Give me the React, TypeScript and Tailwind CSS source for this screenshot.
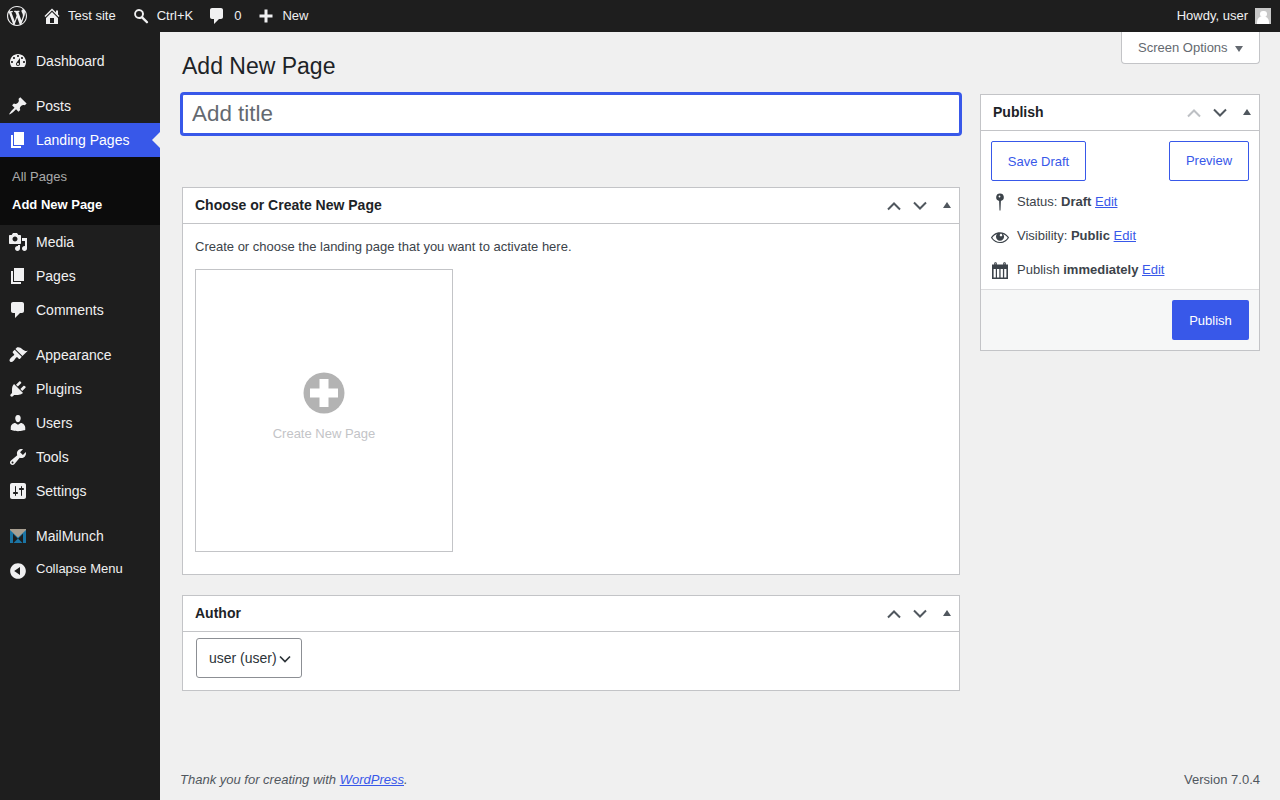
const icons: Record<string, string> = {
  wp: "M20 10c0-5.51-4.49-10-10-10C4.48 0 0 4.49 0 10c0 5.52 4.48 10 10 10 5.51 0 10-4.48 10-10zM7.78 15.37L4.37 6.22c.55-.02 1.17-.08 1.17-.08.5-.06.44-1.13-.06-1.11 0 0-1.45.11-2.37.11-.18 0-.37 0-.58-.01C4.12 2.69 6.87 1.11 10 1.11c2.33 0 4.45.87 6.05 2.34-.68-.11-1.65.39-1.65 1.58 0 .74.45 1.36.9 2.1.35.61.55 1.36.55 2.46 0 1.49-1.4 5-1.4 5l-3.03-8.37c.54-.02.82-.17.82-.17.5-.05.44-1.25-.06-1.22 0 0-1.44.12-2.38.12-.87 0-2.33-.12-2.33-.12-.5-.03-.56 1.2-.06 1.22l.92.08 1.26 3.41zM17.41 10c.24-.64.74-1.87.43-4.25.7 1.29 1.05 2.71 1.05 4.25 0 3.29-1.73 6.24-4.4 7.78.97-2.59 1.94-5.2 2.92-7.78zM6.1 18.09C3.12 16.65 1.11 13.53 1.11 10c0-1.3.23-2.48.72-3.59C3.25 10.3 4.67 14.2 6.1 18.09zm4.03-6.63l2.58 6.98c-.86.29-1.76.45-2.71.45-.79 0-1.57-.11-2.29-.33.81-2.38 1.62-4.74 2.42-7.1z",
  home: "M16 8.5l1.53 1.53-1.06 1.06L10 4.62l-6.47 6.47-1.06-1.06L10 2.5l4 4v-2h2v4zm-6-2.46l6 5.99V18H4v-5.97zM12 17v-5H8v5h4z",
  search: "M8 3a5 5 0 0 1 4.2 7.7l4.7 4.7c.4.4.4 1 0 1.4l-.3.3c-.4.4-1 .4-1.4 0l-4.7-4.7A5 5 0 1 1 8 3zm0 2a3 3 0 1 0 0 6 3 3 0 0 0 0-6z",
  comment: "M5 2h9c1.1 0 2 .9 2 2v7c0 1.1-.9 2-2 2h-2l-5 5v-5H5c-1.1 0-2-.9-2-2V4c0-1.1.9-2 2-2z",
  plus: "M16.5 8.5v3h-5v5h-3v-5h-5v-3h5v-5h3v5z",
  dashboard: "M3.76 16h12.48c1.1-1.37 1.76-3.11 1.76-5 0-4.42-3.58-8-8-8s-8 3.58-8 8c0 1.89.66 3.63 1.76 5zM10 4c.55 0 1 .45 1 1s-.45 1-1 1-1-.45-1-1 .45-1 1-1zM6 6c.55 0 1 .45 1 1s-.45 1-1 1-1-.45-1-1 .45-1 1-1zm8 0c.55 0 1 .45 1 1s-.45 1-1 1-1-.45-1-1 .45-1 1-1zm-5.37 5.55L12 7v6c0 1.1-.9 2-2 2s-2-.9-2-2c0-.57.24-1.08.63-1.45zM4 10c.55 0 1 .45 1 1s-.45 1-1 1-1-.45-1-1 .45-1 1-1zm12 0c.55 0 1 .45 1 1s-.45 1-1 1-1-.45-1-1 .45-1 1-1zm-5 3c0-.55-.45-1-1-1s-1 .45-1 1 .45 1 1 1 1-.45 1-1z",
  pin: "M10.44 3.02l1.82-1.82 6.36 6.35-1.83 1.82c-1.05-.68-2.48-.57-3.41.36l-.75.75c-.92.93-1.04 2.35-.35 3.41l-1.83 1.82-2.41-2.41-2.8 2.79c-.42.42-3.38 2.71-3.8 2.29s1.86-3.39 2.28-3.81l2.79-2.79L4.1 9.36l1.83-1.82c1.05.69 2.48.57 3.4-.36l.75-.75c.93-.92 1.05-2.35.36-3.41z",
  page: "M6 15V2h10v13H6zm-1 1h8v2H3V5h2v11z",
  media: "M13 11V4c0-.55-.45-1-1-1h-1.67L9 1H5L3.67 3H2c-.55 0-1 .45-1 1v7c0 .55.45 1 1 1h10c.55 0 1-.45 1-1zM7 4.5c1.38 0 2.5 1.12 2.5 2.5S8.38 9.5 7 9.5 4.5 8.38 4.5 7 5.62 4.5 7 4.5zM14 6h5v10.5c0 1.38-1.12 2.5-2.5 2.5S14 17.88 14 16.5s1.12-2.5 2.5-2.5c.17 0 .34.02.5.05V9h-3V6zm-4 8.05V13h2v3.5c0 1.38-1.12 2.5-2.5 2.5S7 17.88 7 16.5 8.12 14 9.5 14c.17 0 .34.02.5.05z",
  brush: "M14.48 11.06L7.41 3.99l1.5-1.5c.5-.56 2.3-.47 3.51.32 1.21.8 1.43 1.28 2.91 2.1 1.18.64 2.45 1.26 4.45.85zm-.71.71L6.7 4.7 4.93 6.47c-.39.39-.39 1.02 0 1.41l1.06 1.06c.39.39.39 1.03 0 1.42-.6.6-1.43 1.11-2.21 1.69-.35.26-.7.53-1.01.84-1.43 1.43-1.6 2.8-.75 3.65.85.85 2.22.68 3.65-.75.31-.31.58-.66.84-1.01.58-.78 1.09-1.61 1.69-2.21.39-.39 1.03-.39 1.42 0l1.06 1.06c.39.39 1.02.39 1.41 0z",
  plugin: "M13.11 4.36L9.87 7.6 8 5.73l3.24-3.24c.35-.34 1.05-.2 1.56.32.52.51.66 1.21.31 1.55zm-8 1.77l.91-1.12 9.01 9.01-1.19.84c-.71.71-2.63 1.16-3.82 1.16H6.14L4.9 17.26c-.59.59-1.54.59-2.12 0-.59-.58-.59-1.53 0-2.12l1.24-1.24v-3.88c0-1.13.4-3.19 1.09-3.89zm7.26 3.97l3.24-3.24c.34-.35 1.04-.21 1.55.31.52.51.66 1.21.31 1.55l-3.24 3.25z",
  users: "M10 9.25c-2.27 0-2.73-3.44-2.73-3.44C7 4.02 7.82 2 9.97 2c2.16 0 2.98 2.02 2.71 3.81 0 0-.41 3.44-2.68 3.44zm0 2.57L12.72 10c2.39 0 4.52 2.33 4.52 4.53v2.49s-3.65 1.13-7.24 1.13c-3.65 0-7.24-1.13-7.24-1.13v-2.49c0-2.25 1.94-4.48 4.47-4.48z",
  tools: "M16.68 9.77c-1.34 1.34-3.3 1.67-4.95.99l-5.41 6.52c-.99.99-2.59.99-3.58 0s-.99-2.59 0-3.57l6.52-5.42c-.68-1.65-.35-3.61.99-4.95 1.28-1.28 3.12-1.62 4.72-1.06l-2.89 2.89 2.82 2.82 2.86-2.87c.53 1.58.18 3.39-1.08 4.65zM3.81 16.21c.4.39 1.04.39 1.43 0 .4-.4.4-1.04 0-1.43-.39-.4-1.03-.4-1.43 0-.39.39-.39 1.03 0 1.43z",
  settings: "M18 16V4c0-1.1-.9-2-2-2H4c-1.1 0-2 .9-2 2v12c0 1.1.9 2 2 2h12c1.1 0 2-.9 2-2zM8 11h1c.55 0 1 .45 1 1s-.45 1-1 1H8v1.5c0 .28-.22.5-.5.5s-.5-.22-.5-.5V13H6c-.55 0-1-.45-1-1s.45-1 1-1h1V5.5c0-.28.22-.5.5-.5s.5.22.5.5V11zm5-2h-1c-.55 0-1-.45-1-1s.45-1 1-1h1V5.5c0-.28.22-.5.5-.5s.5.22.5.5V7h1c.55 0 1 .45 1 1s-.45 1-1 1h-1v5.5c0 .28-.22.5-.5.5s-.5-.22-.5-.5V9z",
  collapse: "M10 2.16c4.33 0 7.84 3.51 7.84 7.84s-3.51 7.84-7.84 7.84S2.16 14.33 2.16 10 5.71 2.16 10 2.16zm2 11.72V6.12L6.18 9.97z",
  eye: "M18.3 9.5C15 4.9 8.5 3.8 3.9 7.2c-1.2.9-2.2 2.1-3 3.4.2.4.5.8.8 1.2 3.3 4.6 9.6 5.6 14.2 2.4.9-.7 1.7-1.4 2.4-2.4.3-.4.5-.8.8-1.2-.3-.4-.5-.7-.8-1.1zm-8.2-2.3c.5-.5 1.3-.5 1.8 0s.5 1.3 0 1.8-1.3.5-1.8 0c-.5-.4-.5-1.3 0-1.8zm-.1 7.7c-3.1 0-6-1.6-7.7-4.2C3.5 9 5.1 7.8 7 7c-.7.8-1 1.7-1 2.7 0 2.2 1.7 4.1 4 4.1 2.2 0 4.1-1.7 4.1-4v-.1c0-1-.4-2-1.1-2.7 1.9.8 3.5 2 4.7 3.7-1.7 2.6-4.6 4.2-7.7 4.2z",
  mappin: "M10 1.5a3.8 3.8 0 0 1 .9 7.5l-.4 9.5h-1L9.1 9A3.8 3.8 0 0 1 10 1.5zM9.5 3.6a.9.9 0 1 0 0 1.8.9.9 0 0 0 0-1.8z",
  calendar: "M4.2 4.5V3.2c0-1.4 2.6-1.4 2.6 0v1.3h6.4V3.2c0-1.4 2.6-1.4 2.6 0v1.3H18V19H2V4.5h2.2zm1-.2h.6V3.2h-.6v1.1zm9 0h.6V3.2h-.6v1.1zM3.6 9v8.5h2.2V9H3.6zm3.4 0v8.5h2.3V9H7zm3.6 0v8.5h2.3V9h-2.3zm3.6 0v8.5h2.2V9h-2.2z",
};

function Icon({ name, className }: { name: string; className: string }) {
  return (
    <svg viewBox="0 0 20 20" className={className} fill="currentColor">
      <path fillRule={name === "calendar" || name === "mappin" ? "evenodd" : undefined} d={icons[name]} />
    </svg>
  );
}

function MailMunchIcon() {
  return (
    <svg viewBox="0 0 20 20" className="w-5 h-5 shrink-0">
      <path d="M2 3h16v14h-3V8l-5 5-5-5v9H2z" fill="#1b75a5" />
      <path d="M2 3h16v1l-8 7.5L2 4z" fill="#a89f91" />
      <path d="M5 8l5 5 5-5v9H5z" fill="#1e1e1e" />
      <path d="M5.5 17L10 12.5l4.5 4.5z" fill="#1b75a5" />
    </svg>
  );
}

function MenuItem({ icon, label, active }: { icon: string; label: string; active?: boolean }) {
  return (
    <div className={`relative h-[34px] flex items-center pl-2 gap-2 text-sm ${active ? "bg-[#3858e9] text-white" : "text-[#f0f0f1]"}`}>
      <Icon name={icon} className="w-5 h-5 shrink-0" />
      <span>{label}</span>
      {active && (
        <div className="absolute right-0 top-[9px] w-0 h-0 border-y-8 border-y-transparent border-r-8 border-r-[#f0f0f0]" />
      )}
    </div>
  );
}

function Sep() {
  return <div className="h-[11px]" />;
}

function Sidebar() {
  return (
    <aside className="w-40 shrink-0 bg-[#1e1e1e] pt-3">
      <MenuItem icon="dashboard" label="Dashboard" />
      <Sep />
      <MenuItem icon="pin" label="Posts" />
      <MenuItem icon="page" label="Landing Pages" active />
      <div className="bg-[#0c0c0c] h-[68px] pt-2 pl-3 text-[13px]">
        <div className="h-[28px] leading-[24px] text-[#f0f0f1]/70">All Pages</div>
        <div className="h-[28px] leading-[24px] font-bold text-white">Add New Page</div>
      </div>
      <MenuItem icon="media" label="Media" />
      <MenuItem icon="page" label="Pages" />
      <MenuItem icon="comment" label="Comments" />
      <Sep />
      <MenuItem icon="brush" label="Appearance" />
      <MenuItem icon="plugin" label="Plugins" />
      <MenuItem icon="users" label="Users" />
      <MenuItem icon="tools" label="Tools" />
      <MenuItem icon="settings" label="Settings" />
      <Sep />
      <div className="h-[34px] flex items-center pl-2 gap-2 text-sm text-[#f0f0f1]">
        <MailMunchIcon />
        <span>MailMunch</span>
      </div>
      <div className="h-[34px] flex items-center pl-2 gap-2 text-[13px] text-[#f0f0f1] pb-[3px]">
        <Icon name="collapse" className="w-5 h-5 shrink-0 relative top-[2px]" />
        <span>Collapse Menu</span>
      </div>
    </aside>
  );
}

function TopBar() {
  return (
    <header className="h-8 shrink-0 bg-[#1e1e1e] text-[#f0f0f1] text-[13px] flex items-center pl-[7px] pr-[9px]">
      <Icon name="wp" className="w-5 h-5" />
      <Icon name="home" className="w-5 h-5 ml-[15px]" />
      <span className="ml-1.5">Test site</span>
      <Icon name="search" className="w-5 h-5 ml-[15px]" />
      <span className="ml-1.5">Ctrl+K</span>
      <Icon name="comment" className="w-5 h-5 ml-[14px]" />
      <span className="ml-[7px]">0</span>
      <Icon name="plus" className="w-5 h-5 ml-[15px]" />
      <span className="ml-1.5">New</span>
      <span className="ml-auto">Howdy, user</span>
      <div className="ml-[7px] w-4 h-4 bg-[#c8c8c8] overflow-hidden flex flex-col items-center">
        <div className="w-[7px] h-[8px] mt-[3px] rounded-full bg-white" />
        <div className="w-3 h-3 -mt-px rounded-t-full bg-white" />
      </div>
    </header>
  );
}

function BoxControls({ upLight }: { upLight?: boolean }) {
  return (
    <div className="flex items-center">
      <svg viewBox="0 0 16 10" className={`w-4 h-[10px] ${upLight ? "text-[#bdc0c4]" : "text-[#50575e]"}`} fill="none" stroke="currentColor" strokeWidth="2">
        <path d="M2 8.5l6-6 6 6" />
      </svg>
      <svg viewBox="0 0 16 10" className="w-4 h-[10px] ml-[10px] text-[#50575e]" fill="none" stroke="currentColor" strokeWidth="2">
        <path d="M2 1.5l6 6 6-6" />
      </svg>
      <div className="ml-[15px] -mt-0.5 w-0 h-0 border-x-4 border-x-transparent border-b-[6px] border-b-[#50575e]" />
    </div>
  );
}

function Box({ title, upLight, children }: { title: string; upLight?: boolean; children: React.ReactNode }) {
  return (
    <section className="bg-white border border-[#c3c4c7]">
      <div className="h-9 border-b border-[#c3c4c7] flex items-center justify-between pl-3 pr-2">
        <h2 className="text-sm font-bold text-[#1d2327] pb-0.5">{title}</h2>
        <BoxControls upLight={upLight} />
      </div>
      {children}
    </section>
  );
}

function PublishRow({ icon, iconClass, children }: { icon: string; iconClass: string; children: React.ReactNode }) {
  return (
    <div className="h-[34px] flex items-center pl-[10px] text-[13px] text-[#3c434a]">
      <div className="w-[27px] shrink-0 -ml-px flex items-center">
        <Icon name={icon} className={iconClass} />
      </div>
      <div className="pt-0.5">{children}</div>
    </div>
  );
}

function EditLink() {
  return <a className="text-[#3858e9] underline">Edit</a>;
}

export default function App() {
  return (
    <div className="w-[1280px] h-[800px] overflow-hidden flex flex-col bg-[#f0f0f0] font-['Liberation_Sans',Arial,sans-serif]">
      <TopBar />
      <div className="flex flex-1 min-h-0">
        <Sidebar />
        <main className="flex-1 flex flex-col pl-[22px] pr-5">
          <div className="h-[62px] flex items-start justify-between">
            <h1 className="text-[23px] leading-[29px] mt-5 text-[#1d2327]">Add New Page</h1>
            <div className="w-[139px] h-8 bg-white border border-t-0 border-[#c3c4c7] rounded-b flex items-center pl-4 text-[13px] text-[#646970]">
              Screen Options
              <div className="ml-[7px] mt-0.5 w-0 h-0 border-x-4 border-x-transparent border-t-[6px] border-t-[#646970]" />
            </div>
          </div>

          <div className="flex gap-5 items-start">
            <div className="w-[778px] flex flex-col">
              <input
                placeholder="Add title"
                className="w-[778px] h-10 bg-white pl-[9px] pr-2 text-[22.4px] rounded-[2px] outline-none border border-[#3858e9] ring-2 ring-[#3858e9] placeholder:text-[#646970]"
              />
              <div className="h-[53px]" />
              <Box title="Choose or Create New Page">
                <div className="px-3 pt-[15px] pb-[22px]">
                  <p className="text-[13px] leading-[15px] text-[#3c434a]">Create or choose the landing page that you want to activate here.</p>
                  <div className="mt-[15px] w-[258px] h-[283px] border border-[#c3c4c7] flex flex-col items-center pt-[102px]">
                    <svg viewBox="0 0 42 42" className="w-[42px] h-[42px]">
                      <circle cx="21" cy="21" r="20.5" fill="#b3b3b3" />
                      <path d="M16.5 7h9v9.5H35v9h-9.5V35h-9v-9.5H7v-9h9.5z" fill="#fff" />
                    </svg>
                    <span className="mt-[10px] text-[13px] text-[#c3c4c7]">Create New Page</span>
                  </div>
                </div>
              </Box>
              <div className="h-5" />
              <Box title="Author">
                <div className="pl-[13px] pt-[6px] pb-3">
                  <div className="w-[106px] h-10 bg-white border border-[#8c8f94] rounded-[3px] flex items-center pl-3 text-sm text-[#2c3338]">
                    user (user)
                    <svg viewBox="0 0 12 8" className="w-3 h-2 ml-[2px] mt-0.5" fill="none" stroke="currentColor" strokeWidth="1.7">
                      <path d="M1 1.5l5 5 5-5" />
                    </svg>
                  </div>
                </div>
              </Box>
            </div>

            <div className="w-[280px]">
              <Box title="Publish" upLight>
                <div className="px-[10px] pt-[10px] flex justify-between">
                  <button className="w-[95px] h-10 border border-[#3858e9] rounded-[2px] bg-white text-[13px] text-[#3858e9] pt-0.5">Save Draft</button>
                  <button className="w-20 h-10 border border-[#3858e9] rounded-[2px] bg-white text-[13px] text-[#3858e9]">Preview</button>
                </div>
                <div className="pt-[3px] pb-[3px]">
                  <PublishRow icon="mappin" iconClass="w-5 h-5 mt-0.5">Status: <b>Draft</b> <EditLink /></PublishRow>
                  <PublishRow icon="eye" iconClass="w-5 h-5 mt-1">Visibility: <b>Public</b> <EditLink /></PublishRow>
                  <PublishRow icon="calendar" iconClass="w-5 h-5 mt-0.5">Publish <b>immediately</b> <EditLink /></PublishRow>
                </div>
                <div className="bg-[#f6f7f7] border-t border-[#dcdcde] h-[61px] pt-[10px] pr-[10px] flex justify-end">
                  <button className="w-[77px] h-10 rounded-[2px] bg-[#3858e9] text-[13px] text-white pt-0.5">Publish</button>
                </div>
              </Box>
            </div>
          </div>

          <footer className="mt-auto pb-[13px] flex justify-between text-[13px] leading-[15px] text-[#50575e] -ml-0.5">
            <span className="italic">Thank you for creating with <a className="text-[#3858e9] underline">WordPress</a>.</span>
            <span>Version 7.0.4</span>
          </footer>
        </main>
      </div>
    </div>
  );
}
